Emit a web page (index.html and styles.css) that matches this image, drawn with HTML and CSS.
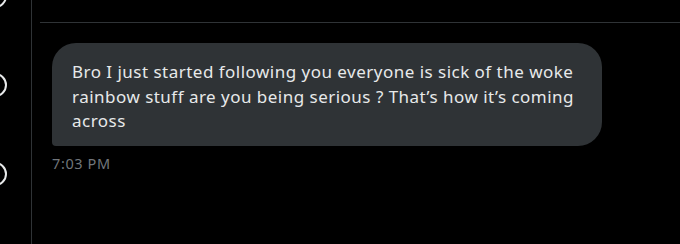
FILE: index.html
```html
<!DOCTYPE html>
<html>
<head>
    <title>Messages</title>
    <link rel="stylesheet" href="styles.css">
</head>
<body>
    <div class="page">
        <div class="rail">
            <svg class="marks" width="31" height="244" viewBox="0 0 31 244">
                <circle cx="-5" cy="-4" r="11" />
                <circle cx="-5" cy="85" r="11" />
                <circle cx="-5" cy="174" r="11" />
            </svg>
        </div>

        <div class="thread">
            <div class="divider"></div>

            <div class="message">
                <div class="bubble">Bro I just started following you everyone is sick of the woke rainbow stuff are you being serious ? That’s how it’s coming across</div>
                <div class="time">7:03 PM</div>
            </div>
        </div>
    </div>
</body>
</html>
```

FILE: styles.css
```css
* {
    box-sizing: border-box;
}

body {
    margin: 0;
    background-color: #000;
    font-family: "Noto Sans", "Open Sans", sans-serif;
    overflow: hidden;
}

.page {
    display: flex;
    height: 244px;
}

.rail {
    width: 32px;
    border-right: 1px solid #2f3336;
    flex-shrink: 0;
}

.marks {
    display: block;
    overflow: visible;
}

.marks circle {
    fill: none;
    stroke: #e7e9ea;
    stroke-width: 2;
}

.thread {
    flex: 1;
    padding-top: 22px;
}

.divider {
    margin-left: 8px;
    border-top: 1px solid #2f3336;
}

.message {
    padding: 20px 0 0 20px;
}

.bubble {
    width: 550px;
    padding: 17px 12px 12px 20px;
    background-color: #2f3336;
    border-radius: 24px 24px 24px 4px;
    color: #e7e9ea;
    font-size: 17px;
    letter-spacing: 0.48px;
    line-height: 24.5px;
}

.time {
    margin-top: 7px;
    color: #71767b;
    font-size: 14.5px;
    letter-spacing: 0.6px;
}
```
